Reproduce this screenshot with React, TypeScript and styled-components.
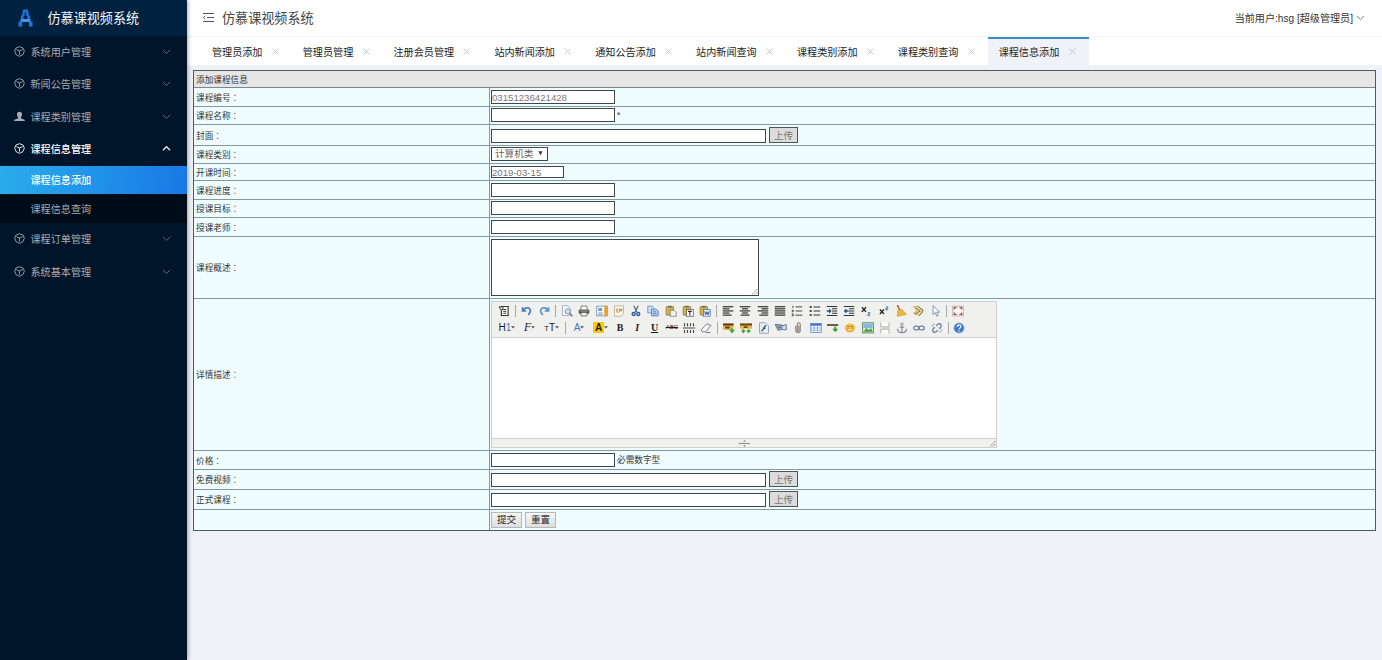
import React from 'react';
import styled, { createGlobalStyle } from 'styled-components';

const SANS = '"Liberation Sans", "Noto Sans CJK SC", sans-serif';

const GlobalStyle = createGlobalStyle`
  * { box-sizing: border-box; }
  body { margin: 0; background: #f0f1f6; font-family: ${SANS}; overflow: hidden; }
  button, input, textarea { font-family: inherit; margin: 0; }
`;

const Shell = styled.div`
  display: flex;
  width: 100%;
  height: 660px;
`;

/* ---------- sidebar ---------- */

const Sidebar = styled.aside`
  flex: none;
  width: 187px;
  background: #001529;
  box-shadow: 1px 0 4px rgba(0, 21, 41, 0.35);
  z-index: 1;
`;

const Brand = styled.div`
  display: flex;
  align-items: center;
  height: 36px;
  padding: 0 0 1px 18px;
  gap: 14.5px;
  background: #002140;
  color: #f4f8fc;
  font-size: 13.1px;
  white-space: nowrap;
`;

const MenuItem = styled.div<{ $open?: boolean }>`
  display: flex;
  align-items: center;
  height: 32.4px;
  padding: 0 16px 1.4px 13.5px;
  color: ${p => (p.$open ? '#ffffff' : '#a6adb4')};
  font-size: 10.15px;
  font-weight: ${p => (p.$open ? 500 : 400)};
`;

const MenuText = styled.span`
  flex: 1;
  margin-left: 6px;
`;

const SubItem = styled.div<{ $active?: boolean }>`
  display: flex;
  align-items: center;
  height: 28.8px;
  padding-left: 30.5px;
  font-size: 10.15px;
  font-weight: ${p => (p.$active ? 500 : 400)};
  color: ${p => (p.$active ? '#ffffff' : '#a6adb4')};
  background: ${p => (p.$active ? 'linear-gradient(100deg, #29adeb, #1878e6)' : '#000c17')};
`;

/* ---------- header ---------- */

const Main = styled.main`
  flex: 1;
  min-width: 0;
`;

const TopBar = styled.header`
  display: flex;
  align-items: center;
  height: 37px;
  padding: 0 17px 1px 16px;
  background: #fff;
  border-bottom: 1px solid #f4f4f4;
  color: #444;
`;

const Title = styled.span`
  flex: 1;
  margin-left: 8px;
  font-size: 13.1px;
`;

const User = styled.span`
  margin-right: 3px;
  font-size: 10.1px;
  color: #333;
`;

const Tabs = styled.nav`
  display: flex;
  height: 28px;
  padding-left: 14.5px;
  background: #fff;
`;

const Tab = styled.div<{ $active?: boolean }>`
  display: flex;
  align-items: center;
  flex: none;
  padding: 0 13.5px 0 10.5px;
  gap: 9.3px;
  height: 28px;
  font-size: 10.1px;
  color: #222;
  background: ${p => (p.$active ? '#f0f2f9' : '#fff')};
  box-shadow: ${p => (p.$active ? 'inset 0 2px 0 #3c8fba' : 'none')};
`;

/* ---------- form ---------- */

const Sheet = styled.section`
  margin: 5px 6px 0 6px;
  border: 1px solid #50595c;
  border-bottom: 0;
  background: #f0fdff;
  font-size: 8.65px;
  color: #333;
`;

const SheetHead = styled.div`
  display: flex;
  align-items: center;
  height: 17px;
  padding-left: 2px;
  background: #e6e6e6;
  border-bottom: 1px solid #7d8687;
`;

const Row = styled.div<{ $h: number; $last?: boolean }>`
  display: flex;
  height: ${p => p.$h}px;
  border-bottom: 1px solid ${p => (p.$last ? '#50595c' : '#87979a')};
`;

const Label = styled.div`
  display: flex;
  align-items: center;
  flex: none;
  width: 296px;
  padding: 0 0 1px 2px;
  border-right: 1px solid #87979a;
`;

const Colon = styled.span`
  font-family: "Noto Sans CJK TC", sans-serif;
`;

const Field = styled.div`
  display: flex;
  align-items: flex-end;
  flex: 1;
  padding: 0 0 2px 1px;
`;

const TextBox = styled.input<{ $w: number; $h?: number }>`
  width: ${p => p.$w}px;
  height: ${p => p.$h || 14}px;
  padding: 0;
  border: 1px solid #3d4648;
  border-radius: 0;
  background: #fff;
  color: #777;
  font-size: 9.65px;
  outline: none;
`;

const Hint = styled.span`
  margin-left: 2px;
  line-height: 14px;
`;

const UploadButton = styled.button`
  width: 29px;
  height: 16px;
  margin-left: 3px;
  padding: 0;
  border: 1px solid #4f5557;
  background: #dcdcdc;
  color: #777;
  font-size: 9.65px;
  line-height: 13px;
`;

const PushButton = styled.button`
  width: 31px;
  height: 16px;
  margin-right: 3px;
  padding: 0;
  border: 1px solid #b4b8b8;
  background: linear-gradient(#f6f6f6, #dedede);
  color: #222;
  font-size: 9.65px;
  line-height: 14px;
`;

const Select = styled.div`
  display: flex;
  align-items: center;
  width: 57px;
  height: 14px;
  padding-left: 3px;
  gap: 4px;
  border: 1px solid #3d4648;
  background: #fff;
  color: #666;
  font-size: 9.65px;
  line-height: 12px;
  white-space: nowrap;
`;

const Area = styled.div`
  display: flex;
  align-items: flex-end;
  justify-content: flex-end;
  width: 268px;
  height: 57px;
  border: 1px solid #3d4648;
  background: #fff;
`;

/* ---------- rich text editor ---------- */

const Editor = styled.div`
  display: flex;
  flex-direction: column;
  width: 506px;
  height: 147px;
  border: 1px solid #ccd0d0;
  background: #fff;
`;

const Toolbar = styled.div`
  height: 36px;
  padding: 1px 0 0 3.7px;
  background: #f0f0ee;
  border-bottom: 1px solid #ccc;
`;

const ToolRow = styled.div`
  display: flex;
  height: 16.5px;
`;

const Tool = styled.span<{ $w?: number }>`
  display: flex;
  align-items: center;
  justify-content: center;
  flex: none;
  width: ${p => p.$w || 17.3}px;
  color: #222;
`;

const Divider = styled.i`
  flex: none;
  width: 1px;
  height: 12px;
  margin: 2px 2.2px 0 2.2px;
  background: #a8a8a8;
`;

type Variant = 'serif' | 'blue' | 'mark' | 'tiny' | 'script' | 'italic' | 'under';
const oneOf = (v: Variant | undefined, ...list: Variant[]) => !!v && list.includes(v);

const Glyph = styled.span<{ $variant?: Variant }>`
  font-size: ${p => (p.$variant === 'tiny' ? 6 : p.$variant === 'script' ? 11.5 : 10)}px;
  line-height: 11px;
  color: ${p => (p.$variant === 'blue' ? '#3a7cc4' : '#1c1c1c')};
  font-family: ${p => (oneOf(p.$variant, 'serif', 'italic', 'under', 'script') ? '"Liberation Serif", serif' : '"Liberation Sans", sans-serif')};
  font-weight: ${p => (oneOf(p.$variant, 'serif', 'italic', 'under', 'mark') ? 700 : 400)};
  font-style: ${p => (oneOf(p.$variant, 'italic', 'script') ? 'italic' : 'normal')};
  text-decoration: ${p => (p.$variant === 'under' ? 'underline' : p.$variant === 'tiny' ? 'line-through' : 'none')};
  background: ${p => (p.$variant === 'mark' ? '#fcc800' : 'transparent')};
  padding: ${p => (p.$variant === 'mark' ? '0 2px' : '0')};
`;

const Small = styled.span`
  font-size: 7.5px;
`;

const BlueText = styled.span`
  color: #2f78c4;
`;

const EditBody = styled.div`
  flex: 1;
`;

const StatusBar = styled.div`
  display: flex;
  align-items: center;
  height: 9px;
  background: #f0f0ee;
  border-top: 1px solid #ccc;
`;

const StatusMiddle = styled.div`
  display: flex;
  flex: 1;
  justify-content: center;
  padding-left: 7px;
`;

/* ---------- drawings ---------- */

const Logo = () => (
  <svg width="15" height="18" viewBox="0 0 15 18" fill="#1f74dc">
    <rect x="5" y="0.500" width="5" height="3" />
    <rect x="4.300" y="3" width="2.400" height="4" />
    <rect x="8.300" y="3" width="2.400" height="4" />
    <rect x="3" y="6.500" width="2.600" height="4" />
    <rect x="9.400" y="6.500" width="2.600" height="4" />
    <rect x="2.500" y="10" width="10" height="3" fill="#3d96f0" />
    <rect x="0.500" y="12.500" width="3.600" height="5" />
    <rect x="10.900" y="12.500" width="3.600" height="5" />
  </svg>
);

const CubeIcon = () => (
  <svg width="11" height="11" viewBox="0 0 16 16" fill="none" stroke="currentColor" strokeWidth="1.3" strokeLinejoin="round">
    <path d="M8 1l5.200 2 1.800 4.500-2 5L8 15l-5-2.500-2-5L2.800 3z" />
    <path d="M3.500 5.200 8 7.300l4.500-2.100M8 7.300v5.200" />
  </svg>
);

const PersonIcon = () => (
  <svg width="11" height="11" viewBox="0 0 16 16" fill="currentColor">
    <path d="M8 1c2.300 0 3.700 1.600 3.700 4 0 1.700-.7 3.200-1.700 4v1.400l4.600 1.800c.8.400 1.100 1 1.100 2.300H.3c0-1.300.3-1.900 1.100-2.300L6 10.400V9C5 8.200 4.300 6.700 4.300 5 4.300 2.600 5.700 1 8 1z" />
  </svg>
);

const Chevron = ({ up = false, color = '#68727c', size = 9 }: { up?: boolean; color?: string; size?: number }) => (
  <svg width={size} height={size} viewBox="0 0 10 10" fill="none" stroke={color} strokeWidth={up ? 1.4 : 1}>
    <path d={up ? 'M1 7l4-4 4 4' : 'M1 3.200l4 4 4-4'} />
  </svg>
);

const FoldIcon = () => (
  <svg width="11" height="11" viewBox="0 0 11 11" fill="none" stroke="#444">
    <path d="M0 1.500h11M4 5.500h7M0 9.500h11M2.200 3.800L.5 5.500l1.700 1.700" strokeWidth="0.9" />
  </svg>
);

const CloseIcon = () => (
  <svg width="7" height="7" viewBox="0 0 7 7" stroke="#c2c2c2" strokeWidth="0.9">
    <path d="M.5.5l6 6M6.500.5l-6 6" />
  </svg>
);

const Grip = () => (
  <svg width="7" height="7" viewBox="0 0 7 7" stroke="#888" strokeWidth="0.8">
    <path d="M1 6.500l5.500-5.500M4 6.500l2.500-2.500" />
  </svg>
);

const SelectArrow = () => (
  <svg width="5" height="6" viewBox="0 0 5 6" fill="#444">
    <path d="M.3.300h4.400L2.500 4.500z" />
  </svg>
);

const Caret = () => (
  <svg width="4" height="3" viewBox="0 0 4 3" fill="#555">
    <path d="M0 .3h4L2 2.500z" />
  </svg>
);

const ResizeMark = () => (
  <svg width="11" height="7" viewBox="0 0 11 7" fill="#888">
    <path d="M0 3h11v1H0zM4.300 1.800 5.500 0l1.200 1.800zM4.300 5.200 5.500 7l1.200-1.800z" />
  </svg>
);

const lines = (rows: [number, number][]) => (
  <g fill="#333">
    {rows.map(([x, w], i) => (
      <rect key={i} x={x} y={1.5 + i * 2.8} width={w} height="1.600" />
    ))}
  </g>
);

const clipboard = (
  <>
    <rect x="1.500" y="2" width="10" height="11.500" rx="1" fill="#d8b04c" stroke="#8d7434" />
    <rect x="4" y="1" width="5" height="2.500" fill="#77736a" />
  </>
);

const art: Record<string, React.ReactNode> = {
  source: (
    <>
      <path d="M4 2h9.500v12H4.500V7" fill="#fff" stroke="#333" strokeWidth="1.500" />
      <path d="M1.500 2.500h5v4h-3zM7 6h4M7 8.500h4M7 11h4" fill="none" stroke="#333" strokeWidth="1.300" />
    </>
  ),
  undo: <path d="M2 3v5h5M2.500 7.500C5 3.500 9 2.500 11.500 5c2 2.300 1 5.500-2 8" fill="none" stroke="#4479bd" strokeWidth="2.200" />,
  redo: <path d="M14 3v5H9M13.500 7.500C11 3.500 7 2.500 4.500 5c-2 2.300-1 5.500 2 8" fill="none" stroke="#5a8bc4" strokeWidth="2.200" />,
  preview: (
    <>
      <path d="M2 1h7l3 3v10H2z" fill="#fff" stroke="#8b9cb2" />
      <circle cx="9" cy="8.500" r="3.500" fill="#cfe3f3" stroke="#6f87a3" strokeWidth="1.200" />
      <path d="M11.500 11l3.500 4" stroke="#65788d" strokeWidth="2" />
    </>
  ),
  print: (
    <>
      <path d="M4 6V1.500h8V6" fill="#fff" stroke="#555" />
      <rect x="1" y="6" width="14" height="5.500" rx="1" fill="#555" />
      <path d="M4 10h8v4.500H4z" fill="#eee" stroke="#555" />
      <path d="M3 8h10" stroke="#bbb" />
    </>
  ),
  template: (
    <>
      <rect x="1" y="1.500" width="14" height="13" fill="#f8fafc" stroke="#5f86b5" />
      <rect x="11" y="1" width="4" height="14" fill="#e0a634" />
      <rect x="3" y="4" width="5" height="4" fill="#6a9cd0" />
      <path d="M3 10.500h6M3 12.500h6" stroke="#789" />
    </>
  ),
  code: (
    <>
      <path d="M2 1h12v10l-3 4H2z" fill="#faf6ea" stroke="#ada895" />
      <path d="M7.500 5.500H5v4h2.500M9 9.500v-4h3v2H9" fill="none" stroke="#c98545" strokeWidth="1.300" />
    </>
  ),
  cut: (
    <>
      <path d="M5 1l4.500 9M11 1L6.500 10" stroke="#52647d" strokeWidth="1.600" />
      <circle cx="4.800" cy="12" r="2" fill="none" stroke="#315ea0" strokeWidth="1.800" />
      <circle cx="11" cy="12" r="2" fill="none" stroke="#315ea0" strokeWidth="1.800" />
    </>
  ),
  copy: (
    <>
      <path d="M1 1.500h6l2 2v7H1z" fill="#c9dcf6" stroke="#5c85c0" />
      <path d="M6 5.500h6l3 2.500v6.500H6z" fill="#b5cff3" stroke="#4470b4" />
      <path d="M8 9h4M8 11.500h5" stroke="#4470b4" />
    </>
  ),
  paste: (
    <>
      {clipboard}
      <path d="M7 7h5l3 3v5H7z" fill="#f5f5ee" stroke="#68727d" />
    </>
  ),
  pasteText: (
    <>
      {clipboard}
      <rect x="6" y="6" width="9" height="9" fill="#fff" stroke="#555" />
      <path d="M8 8.500h5M10.500 8.500V14" stroke="#222" strokeWidth="1.400" />
    </>
  ),
  pasteWord: (
    <>
      {clipboard}
      <rect x="6" y="6" width="9" height="9" fill="#e5eefb" stroke="#4a72ae" />
      <path d="M7.500 8.500l1.500 4.500 1.500-4 1.500 4 1.500-4.500" fill="none" stroke="#2856a0" strokeWidth="1.300" />
    </>
  ),
  left: lines([[1, 14], [1, 9], [1, 14], [1, 9], [1, 12]]),
  center: lines([[1, 14], [4, 8], [1, 14], [4, 8], [2, 12]]),
  right: lines([[1, 14], [6, 9], [1, 14], [6, 9], [3, 12]]),
  justify: lines([[1, 14], [1, 14], [1, 14], [1, 14], [1, 14]]),
  ordered: <path d="M6 2.500h9M6 8h9M6 13.500h9M2.500 1v3M1 7h2v2H1M1 12h2v2.500H1" fill="none" stroke="#444" strokeWidth="1.300" />,
  bullets: (
    <g fill="#333">
      <rect x="1" y="1.500" width="2.500" height="2.500" />
      <rect x="1" y="6.700" width="2.500" height="2.500" />
      <rect x="1" y="12" width="2.500" height="2.500" />
      <path d="M6 2h9v1.400H6zM6 7.300h9v1.400H6zM6 12.600h9V14H6z" />
    </g>
  ),
  indent: (
    <>
      <path d="M1 2h14M8 5h7M8 8h7M8 11h7M1 14h14" stroke="#333" strokeWidth="1.600" />
      <path d="M1 7h3V4.500L7.500 8 4 11.500V9H1z" fill="#264f88" />
    </>
  ),
  outdent: (
    <>
      <path d="M1 2h14M8 5h7M8 8h7M8 11h7M1 14h14" stroke="#333" strokeWidth="1.600" />
      <path d="M7.500 7h-3V4.500L1 8l3.500 3.500V9h3z" fill="#264f88" />
    </>
  ),
  sub: (
    <>
      <path d="M2.500 3l5.500 6M8 3L2.500 9" stroke="#222" strokeWidth="1.700" />
      <path d="M10.500 10h2.500v2h-2.500v2h3" fill="none" stroke="#34659c" strokeWidth="1.100" />
    </>
  ),
  sup: (
    <>
      <path d="M2.500 6l5.500 6M8 6l-5.500 6" stroke="#222" strokeWidth="1.700" />
      <path d="M10.500 2.500h2.500v2h-2.500v2h3" fill="none" stroke="#34659c" strokeWidth="1.100" />
    </>
  ),
  broom: (
    <>
      <path d="M3 0l3.500 7" stroke="#a8562c" strokeWidth="2" />
      <path d="M4 7l5-1.500 6 7L3 15z" fill="#edb93f" stroke="#cf962a" />
    </>
  ),
  format: (
    <>
      <path d="M2 2h7l5 5v3l-4 4-8-3 5-3z" fill="#f0da84" stroke="#b8974a" />
      <path d="M5 4l6 4-7 4M8 2l7 5-5 7" fill="none" stroke="#6a6252" strokeWidth="1.100" />
    </>
  ),
  pointer: <path d="M4 1v12l3-3 2 5 2-1-2-4.500h4z" fill="#f5faff" stroke="#7891ad" strokeWidth="1.200" />,
  full: (
    <>
      <rect x="1" y="1.500" width="14" height="13" fill="#fdf9f7" stroke="#a9a0a0" />
      <path d="M3 6V3.500h3M10 3.500h3V6M13 10v2.500h-3M6 12.500H3V10" fill="none" stroke="#b0433b" strokeWidth="1.600" />
    </>
  ),
  rule: <path d="M2 1.500v4M6 1.500v4M10 1.500v4M14 1.500v4M0 8h16M2 10.500v4M6 10.500v4M10 10.500v4M14 10.500v4" stroke="#444" strokeWidth="1.500" />,
  eraser: <path d="M1.500 10.500L9 2.500l5.500 2-7 8.500H3zM8 14h6" fill="#fff" stroke="#6b7c9a" strokeWidth="1.300" />,
  image: (
    <>
      <rect x="0" y="2" width="14" height="8.500" fill="#e7b93b" />
      <path d="M0 2h14v2.500H0zM3 6h6v2.500H3z" fill="#5b3a20" />
      <path d="M9 11.500h6M12 8.500v6" stroke="#39a437" strokeWidth="2.200" />
    </>
  ),
  images: (
    <>
      <rect x="0" y="2" width="16" height="7" fill="#e7b93b" />
      <path d="M0 2h16v2.500H0zM5 5.500h5V8H5z" fill="#654225" />
      <path d="M2 12h5M4.500 9.500v5M9 12h5M11.500 9.500v5" stroke="#39a437" strokeWidth="2" />
    </>
  ),
  flash: (
    <>
      <path d="M2 1h8l4 4v10H2z" fill="#e6eef7" stroke="#7a95b2" />
      <path d="M11 5C7 5 8 12 4.500 12M6.500 8.500H10" fill="none" stroke="#31506e" strokeWidth="1.700" />
    </>
  ),
  media: (
    <>
      <path d="M0 3l10 1v6l-6 1z" fill="#8ba1b9" stroke="#53677e" />
      <path d="M10 5l5-1.500v7L10 10M4 7h4" fill="#d4e3f1" stroke="#3f566e" />
    </>
  ),
  clip: <path d="M5 5v6c0 4 6 4 6 0V4c0-4-4-4-4 0v7c0 1.500 2 1.500 2 0V5" fill="none" stroke="#858585" strokeWidth="1.500" />,
  table: (
    <>
      <rect x="1" y="2" width="14" height="12" fill="#f7fbff" stroke="#5682c0" />
      <path d="M1 3.500h14" stroke="#4475c0" strokeWidth="3" />
      <path d="M1 8h14M1 11h14M5.500 4v10M10 4v10" stroke="#7fa4d6" />
    </>
  ),
  hr: (
    <>
      <path d="M0 4h15" stroke="#6e5a45" strokeWidth="2.600" />
      <path d="M7 9h2.800V6h2.400v3H15l-4 4.500z" fill="#34a331" />
    </>
  ),
  smile: (
    <>
      <ellipse cx="8" cy="8" rx="6.800" ry="6" fill="#f7bb3d" />
      <path d="M4.500 6h2M9.500 6h2" stroke="#8a4e12" strokeWidth="1.300" />
      <path d="M3.500 9c1 3.500 8 3.500 9 0z" fill="#fff" stroke="#c27a26" strokeWidth="0.800" />
    </>
  ),
  map: (
    <>
      <rect x="0.800" y="1" width="14.400" height="13.500" fill="#d9ead0" stroke="#5c9160" strokeWidth="1.300" />
      <rect x="2" y="2" width="12" height="6" fill="#87b8e4" />
      <path d="M2 13l4-5 3 3 3-3 2 5z" fill="#4a9a46" />
    </>
  ),
  pagebreak: (
    <>
      <path d="M2.500 1v5.500h11V1M2.500 15V9.500h11V15" fill="#fff" stroke="#a3a3a3" strokeWidth="1.300" />
    </>
  ),
  anchor: (
    <>
      <circle cx="8" cy="3" r="1.600" fill="none" stroke="#7c8894" strokeWidth="1.200" />
      <path d="M8 5v9M5 7h6M2 9c0 7 12 7 12 0" fill="none" stroke="#7c8894" strokeWidth="1.500" />
    </>
  ),
  link: (
    <>
      <rect x="1" y="5.500" width="7" height="5" rx="2.500" fill="none" stroke="#66809d" strokeWidth="1.700" />
      <rect x="8" y="5.500" width="7" height="5" rx="2.500" fill="none" stroke="#66809d" strokeWidth="1.700" />
    </>
  ),
  unlink: (
    <>
      <path d="M7 5L9 3c3-2 6 1 4 4l-2 2M9 11l-2 2c-3 2-6-1-4-4l2-2" fill="none" stroke="#6b819a" strokeWidth="1.800" />
      <path d="M3 2l2 2M1 5h2M11 12l2 2M13 11h2" stroke="#6b819a" strokeWidth="1.200" />
    </>
  ),
  help: (
    <>
      <circle cx="8" cy="8" r="6.800" fill="#3f78c8" stroke="#8eb2df" />
      <path d="M5.500 6.500c0-3.500 5-3.500 5-.5 0 2-2.500 1.700-2.500 3.700M8 11v1.700" fill="none" stroke="#fff" strokeWidth="1.600" />
    </>
  ),
};

const ToolIcon = ({ name }: { name: string }) => (
  <Tool>
    <svg width="12" height="12" viewBox="0 0 16 16">{art[name]}</svg>
  </Tool>
);

const icons = (names: string) => names.split(' ').map((n, i) => (n === '|' ? <Divider key={i} /> : <ToolIcon key={i} name={n} />));

/* ---------- page ---------- */

const tabs = ['管理员添加', '管理员管理', '注册会员管理', '站内新闻添加', '通知公告添加', '站内新闻查询', '课程类别添加', '课程类别查询', '课程信息添加'];

const FormRow = ({ h, label, last, children }: { h: number; label?: string; last?: boolean; children: React.ReactNode }) => (
  <Row $h={h} $last={last}>
    <Label>{label}{label && <Colon lang="zh-TW">：</Colon>}</Label>
    <Field>{children}</Field>
  </Row>
);

const Nav = ({ label, open, person }: { label: string; open?: boolean; person?: boolean }) => (
  <MenuItem $open={open}>
    {person ? <PersonIcon /> : <CubeIcon />}
    <MenuText>{label}</MenuText>
    <Chevron up={open} color={open ? '#e6e9ec' : undefined} />
  </MenuItem>
);

const RichEditor = () => (
  <Editor>
    <Toolbar>
      <ToolRow>
        {icons('source | undo redo | preview print template code cut copy paste pasteText pasteWord | left center right justify ordered bullets indent outdent sub sup broom format pointer | full')}
      </ToolRow>
      <ToolRow>
        <Tool $w={22.5}><Glyph>H<BlueText>1</BlueText></Glyph><Caret /></Tool>
        <Tool $w={22.5}><Glyph $variant="script">F</Glyph><Caret /></Tool>
        <Tool $w={22}><Glyph><Small>T</Small>T</Glyph><Caret /></Tool>
        <Divider />
        <Tool $w={22}><Glyph $variant="blue">A</Glyph><Caret /></Tool>
        <Tool $w={21.3}><Glyph $variant="mark">A</Glyph><Caret /></Tool>
        <Tool><Glyph $variant="serif">B</Glyph></Tool>
        <Tool><Glyph $variant="italic">I</Glyph></Tool>
        <Tool><Glyph $variant="under">U</Glyph></Tool>
        <Tool><Glyph $variant="tiny">ABC</Glyph></Tool>
        {icons('rule eraser | image images flash media clip table hr smile map pagebreak anchor link unlink | help')}
      </ToolRow>
    </Toolbar>
    <EditBody />
    <StatusBar>
      <StatusMiddle><ResizeMark /></StatusMiddle>
      <Grip />
    </StatusBar>
  </Editor>
);

export default function App() {
  return (
    <>
      <GlobalStyle />
      <Shell>
        <Sidebar>
          <Brand><Logo />仿慕课视频系统</Brand>
          <Nav label="系统用户管理" />
          <Nav label="新闻公告管理" />
          <Nav label="课程类别管理" person />
          <Nav label="课程信息管理" open />
          <SubItem $active>课程信息添加</SubItem>
          <SubItem>课程信息查询</SubItem>
          <Nav label="课程订单管理" />
          <Nav label="系统基本管理" />
        </Sidebar>
        <Main>
          <TopBar>
            <FoldIcon />
            <Title>仿慕课视频系统</Title>
            <User>当前用户:hsg [超级管理员]</User>
            <Chevron color="#777" size={9} />
          </TopBar>
          <Tabs>
            {tabs.map((t, i) => (
              <Tab key={t} $active={i === tabs.length - 1}>{t}<CloseIcon /></Tab>
            ))}
          </Tabs>
          <Sheet>
            <SheetHead>添加课程信息</SheetHead>
            <FormRow h={19} label="课程编号"><TextBox $w={124} defaultValue="03151236421428" /></FormRow>
            <FormRow h={18} label="课程名称"><TextBox $w={124} /><Hint>*</Hint></FormRow>
            <FormRow h={21} label="封面"><TextBox $w={275} /><UploadButton>上传</UploadButton></FormRow>
            <FormRow h={18} label="课程类别"><Select>计算机类<SelectArrow /></Select></FormRow>
            <FormRow h={17} label="开课时间"><TextBox $w={73} $h={12} defaultValue="2019-03-15" /></FormRow>
            <FormRow h={19} label="课程进度"><TextBox $w={124} /></FormRow>
            <FormRow h={18} label="授课目标"><TextBox $w={124} /></FormRow>
            <FormRow h={19} label="授课老师"><TextBox $w={124} /></FormRow>
            <FormRow h={62} label="课程概述"><Area><Grip /></Area></FormRow>
            <FormRow h={152} label="详情描述"><RichEditor /></FormRow>
            <FormRow h={19} label="价格"><TextBox $w={124} /><Hint>必需数字型</Hint></FormRow>
            <FormRow h={20} label="免费视频"><TextBox $w={275} /><UploadButton>上传</UploadButton></FormRow>
            <FormRow h={20} label="正式课程"><TextBox $w={275} /><UploadButton>上传</UploadButton></FormRow>
            <FormRow h={21} last><PushButton>提交</PushButton><PushButton>重置</PushButton></FormRow>
          </Sheet>
        </Main>
      </Shell>
    </>
  );
}
